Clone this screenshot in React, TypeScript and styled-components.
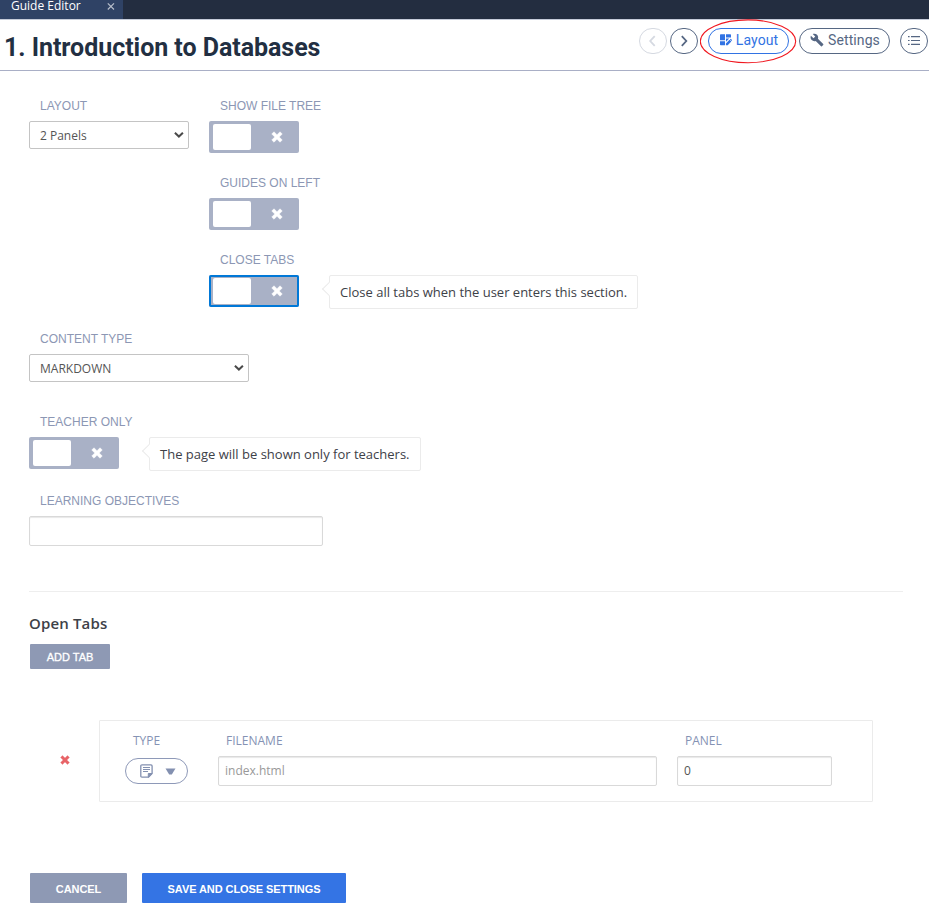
import React from "react";
import styled, { createGlobalStyle, css } from "styled-components";
import { MdBuild } from "react-icons/md";

const Global = createGlobalStyle`
  *, *::before, *::after { box-sizing: border-box; }
  body { margin: 0; background: #fff; color: #3d4148; font: 13px/20px "Open Sans", sans-serif; overflow: hidden; }
  button, input, select { font: inherit; margin: 0; }
`;

const Page = styled.div`
  width: 100%;
  height: 924px;
  overflow: hidden;
  display: flex;
  flex-direction: column;
`;

const TabBar = styled.div`
  height: 19px;
  flex: none;
  display: flex;
  background: #232d40;
`;

const Tab = styled.div`
  width: 123px;
  display: flex;
  align-items: center;
  justify-content: space-between;
  padding: 0 8px 7px 11px;
  background: #2f4265;
  color: #fff;
  font-size: 12px;
  line-height: 12px;
  white-space: nowrap;
`;

const Header = styled.header`
  height: 52px;
  flex: none;
  display: flex;
  align-items: flex-start;
  justify-content: space-between;
  padding: 8px 1px 0 4px;
  border-top: 1px solid #c5cbd9;
  border-bottom: 1px solid #a9afc6;
`;

const Title = styled.h1`
  margin: 5px 0 0;
  font: 700 25px/30px Roboto, sans-serif;
  letter-spacing: -0.04px;
  color: #222f42;
  white-space: nowrap;
`;

const Actions = styled.nav`
  display: flex;
  align-items: center;
`;

const Pill = styled.button<{ $width: number; $gap?: number; $tone?: "active" | "muted" }>`
  position: relative;
  display: flex;
  align-items: center;
  justify-content: center;
  gap: 4px;
  width: ${(p) => p.$width}px;
  height: 26px;
  margin-left: ${(p) => p.$gap ?? 0}px;
  padding: 0 0 2px 1px;
  border: 1px solid currentColor;
  border-radius: 14px;
  background: #fff;
  color: ${(p) => (p.$tone === "active" ? "#3273e3" : p.$tone === "muted" ? "#d5d9e1" : "#566783")};
  font: 14px/20px Roboto, sans-serif;
  letter-spacing: 0.1px;
  white-space: nowrap;
  svg { flex: none; }
`;

const RoundPill = styled(Pill)`
  padding: 0;
`;

const Highlight = styled.svg`
  position: absolute;
  left: -9px;
  top: -10px;
  pointer-events: none;
`;

const Main = styled.main`
  display: flex;
  flex-direction: column;
  padding: 24px 26px 0 29px;
`;

const TopFields = styled.div`
  display: flex;
  align-items: flex-start;
  gap: 20px;
`;

const Stack = styled.div`
  display: flex;
  flex-direction: column;
  gap: 19px;
`;

const Field = styled.div<{ $before?: number }>`
  margin-top: ${(p) => p.$before ?? 0}px;
`;

const Label = styled.label`
  display: block;
  height: 20px;
  margin-bottom: 6px;
  padding-left: 11px;
  font: 12px/23px "Liberation Sans", Arial, sans-serif;
  color: #8c97b4;
  white-space: nowrap;
`;

const SelectBox = styled.div<{ $width: number }>`
  width: ${(p) => p.$width}px;
  height: 28px;
  display: flex;
  align-items: center;
  justify-content: space-between;
  padding: 1px 4px 0 10px;
  border: 1px solid #c4c4c4;
  border-radius: 2px;
  color: #555;
  font-size: 12px;
  svg { margin-bottom: 1px; }
`;

const ControlRow = styled.div`
  display: flex;
  align-items: flex-start;
`;

const Switch = styled.button<{ $focused?: boolean }>`
  display: flex;
  align-items: center;
  width: 90px;
  height: 32px;
  padding: 0 16px 0 4px;
  border: 0;
  border-radius: 2px;
  background: #a9b1c6;
  justify-content: space-between;
  ${(p) => p.$focused && css`box-shadow: inset 0 0 0 2px #0078d7;`}
`;

const Knob = styled.span`
  width: 38px;
  height: 26px;
  border-radius: 2px;
  background: #fff;
`;

const Hint = styled.div`
  position: relative;
  height: 34px;
  margin: 0 0 -2px 30px;
  padding: 0 10px;
  border: 1px solid #ebebeb;
  border-radius: 2px;
  font-size: 13px;
  line-height: 33px;
  white-space: nowrap;
  &::before {
    content: "";
    position: absolute;
    left: -6px;
    top: 8px;
    width: 10px;
    height: 10px;
    border: solid #ebebeb;
    border-width: 0 0 1px 1px;
    background: #fff;
    transform: rotate(45deg);
  }
`;

const TextInput = styled.input<{ $width: number; $muted?: boolean }>`
  display: block;
  width: ${(p) => p.$width}px;
  height: 30px;
  padding: 0 6px 1px;
  border: 1px solid #d9d9d9;
  border-radius: 2px;
  box-shadow: inset 0 1px 1px #e8e8e8;
  background: #fff;
  color: ${(p) => (p.$muted ? "#999" : "#555")};
  font-size: 12px;
  outline: none;
`;

const Divider = styled.div`
  height: 1px;
  margin-top: 45px;
  width: 874px;
  background: #eee;
`;

const SectionTitle = styled.h2`
  margin: 21px 0 10px;
  font-size: 15px;
  line-height: 21px;
  font-weight: 600;
  letter-spacing: 0.15px;
  color: #3d4148;
`;

const SolidButton = styled.button<{ $width: number; $height: number; $primary?: boolean }>`
  width: ${(p) => p.$width}px;
  height: ${(p) => p.$height}px;
  padding: 1px 0 0;
  border: 0;
  border-radius: 1px;
  background: ${(p) => (p.$primary ? "#3474e4" : "#8e99b4")};
  color: #fff;
  font: 700 11px/16px "Liberation Sans", Arial, sans-serif;
  letter-spacing: -0.08px;
  white-space: nowrap;
`;

const AddButton = styled(SolidButton)`
  margin-left: 1px;
  font-weight: 400;
  letter-spacing: 0;
  -webkit-text-stroke: 0.3px #fff;
`;

const TabEntry = styled.div`
  display: flex;
  align-items: center;
  gap: 29px;
  margin: 51px 0 0 31px;
`;

const RemoveButton = styled.button`
  display: flex;
  padding: 0 0 3px;
  border: 0;
  background: none;
`;

const Card = styled.div`
  display: flex;
  width: 774px;
  height: 82px;
  padding: 9px 0 0 25px;
  border: 1px solid #ebebeb;
  border-radius: 1px;
`;

const Column = styled.div<{ $width: number }>`
  width: ${(p) => p.$width}px;
  flex: none;
`;

const ColumnLabel = styled.div`
  height: 20px;
  margin-bottom: 6px;
  padding-left: 8px;
  font-size: 12px;
  line-height: 21px;
  color: #8592b4;
`;

const TypePicker = styled.button`
  display: flex;
  align-items: center;
  gap: 12px;
  width: 63px;
  height: 26px;
  margin-top: 8px;
  padding: 0 0 0 14px;
  border: 1px solid #8e99b8;
  border-radius: 13px;
  background: #fff;
`;

const Footer = styled.div`
  display: flex;
  gap: 15px;
  margin: 71px 0 0 1px;
`;

const Chevron = () => (
  <svg width="11" height="8" viewBox="0 0 11 8">
    <path d="M1.9 1.7 5.9 5.5 9.9 1.7" fill="none" stroke="#4a4a4a" strokeWidth="2" />
  </svg>
);

const Cross = ({ size = 12, color = "#fff" }: { size?: number; color?: string }) => (
  <svg width={size} height={size} viewBox="0 0 12 12">
    <path
      d="M3 .7 6 3.7l3-3L11.3 3l-3 3 3 3L9 11.3l-3-3-3 3L.7 9l3-3-3-3Z"
      fill={color}
      stroke={color}
      strokeWidth=".4"
      strokeLinejoin="round"
    />
  </svg>
);

const LayoutIcon = () => (
  <svg width="12" height="12" viewBox="0 0 12 12" fill="currentColor">
    <path d="M.7.3H5v6H0V1Q0 .3.7.3ZM6 .3h4.3q.7 0 .7.7v2.6H6ZM0 7.3h5v3.9H.7q-.7 0-.7-.7ZM6 4.6h3.2L6 7.7ZM5.9 9.4l3.6-3.6 1.8 1.8-3.6 3.6H5.9ZM9.9 5.4l.5-.5q.3-.3.6 0l1 1q.3.3 0 .6l-.4.5Z" />
  </svg>
);

const ListIcon = () => (
  <svg width="12" height="10" viewBox="0 0 12 10" stroke="currentColor" strokeWidth="1.2">
    <path d="M0 .7h1.6M3 .7h9M0 4.5h1.6M3 4.5h9M0 8.3h1.6M3 8.3h9" />
  </svg>
);

const Arrow = ({ left }: { left?: boolean }) => (
  <svg width="8" height="12" viewBox="0 0 8 12" fill="none" stroke="currentColor" strokeWidth="1.8">
    <path d={left ? "M5.7 1.2 1.2 6l4.5 4.8" : "M1.8 1.2 6.3 6l-4.5 4.8"} />
  </svg>
);

const NoteIcon = () => (
  <svg width="13" height="14" viewBox="0 0 13 14" fill="none" stroke="#8390b0">
    <path d="M2 .8h9q1.1 0 1.1 1.1v7.6l-3.5 3.7H2Q.8 13.2.8 12V2Q.8.8 2 .8Z" strokeWidth="1.3" />
    <path d="M3 3.5h7M3 5.5h7M3 7.5h5" strokeWidth="1" />
    <path d="M8.3 13.2V9.5h3.8Z" fill="#8390b0" />
  </svg>
);

const Toggle = ({ focused }: { focused?: boolean }) => (
  <Switch $focused={focused} role="switch" aria-checked={false}>
    <Knob />
    <Cross />
  </Switch>
);

export default function App() {
  return (
    <Page>
      <Global />
      <TabBar>
        <Tab>
          Guide Editor
          <svg width="8" height="8" viewBox="0 0 8 8">
            <path d="m.8 1.3 6.2 6.2M7 1.3.8 7.5" stroke="#b6bdca" strokeWidth="1.2" />
          </svg>
        </Tab>
      </TabBar>
      <Header>
        <Title>1. Introduction to Databases</Title>
        <Actions>
          <RoundPill $width={28} $tone="muted" aria-label="Previous"><Arrow left /></RoundPill>
          <RoundPill $width={28} $gap={3} aria-label="Next"><Arrow /></RoundPill>
          <Pill $width={81} $gap={10} $tone="active">
            <LayoutIcon />
            Layout
            <Highlight width="97" height="45" viewBox="0 0 97 45">
              <ellipse cx="48" cy="22.3" rx="47.7" ry="21.4" fill="none" stroke="#f01820" strokeWidth="1.1" />
            </Highlight>
          </Pill>
          <Pill $width={91} $gap={10}><MdBuild size={14} />Settings</Pill>
          <RoundPill $width={28} $gap={10} aria-label="Contents"><ListIcon /></RoundPill>
        </Actions>
      </Header>
      <Main>
        <TopFields>
          <Field>
            <Label>LAYOUT</Label>
            <SelectBox $width={160}>2 Panels<Chevron /></SelectBox>
          </Field>
          <Stack>
            <Field><Label>SHOW FILE TREE</Label><Toggle /></Field>
            <Field><Label>GUIDES ON LEFT</Label><Toggle /></Field>
            <Field>
              <Label>CLOSE TABS</Label>
              <ControlRow><Toggle focused /><Hint>Close all tabs when the user enters this section.</Hint></ControlRow>
            </Field>
          </Stack>
        </TopFields>
        <Field $before={21}>
          <Label>CONTENT TYPE</Label>
          <SelectBox $width={220}>MARKDOWN<Chevron /></SelectBox>
        </Field>
        <Field $before={29}>
          <Label>TEACHER ONLY</Label>
          <ControlRow><Toggle /><Hint>The page will be shown only for teachers.</Hint></ControlRow>
        </Field>
        <Field $before={21}>
          <Label>LEARNING OBJECTIVES</Label>
          <TextInput $width={294} aria-label="Learning objectives" />
        </Field>
        <Divider />
        <SectionTitle>Open Tabs</SectionTitle>
        <AddButton $width={80} $height={25}>ADD TAB</AddButton>
        <TabEntry>
          <RemoveButton aria-label="Remove tab"><Cross size={10} color="#e86468" /></RemoveButton>
          <Card>
            <Column $width={93}>
              <ColumnLabel>TYPE</ColumnLabel>
              <TypePicker aria-label="Tab type">
                <NoteIcon />
                <svg width="11" height="7" viewBox="0 0 11 7"><path d="M.5.5h10L6.8 6.5H4.2Z" fill="#8390b0" /></svg>
              </TypePicker>
            </Column>
            <Column $width={459}>
              <ColumnLabel>FILENAME</ColumnLabel>
              <TextInput $width={439} $muted defaultValue="index.html" />
            </Column>
            <Column $width={155}>
              <ColumnLabel>PANEL</ColumnLabel>
              <TextInput $width={155} defaultValue="0" />
            </Column>
          </Card>
        </TabEntry>
        <Footer>
          <SolidButton $width={97} $height={30}>CANCEL</SolidButton>
          <SolidButton $width={204} $height={30} $primary>SAVE AND CLOSE SETTINGS</SolidButton>
        </Footer>
      </Main>
    </Page>
  );
}
